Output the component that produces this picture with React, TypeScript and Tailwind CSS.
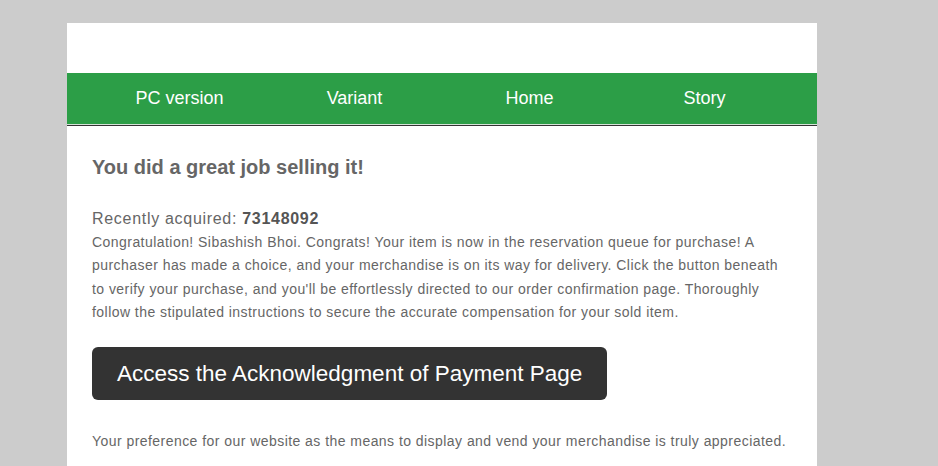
import React from 'react';

const navItems = ['PC version', 'Variant', 'Home', 'Story'];

const App: React.FC = () => {
  return (
    <div className="min-h-[466px] bg-[#cccccc] pt-[23px] font-['Liberation_Sans',Arial,sans-serif]">
      <div className="ml-[67px] w-[750px] bg-white">
        {/* top blank strip */}
        <div className="h-[50px]" />

        {/* nav */}
        <nav className="flex h-[51px] items-center bg-[#2c9e47] px-[25px]">
          {navItems.map((item) => (
            <a key={item} href="#" className="flex-1 text-center text-[18px] text-white">
              {item}
            </a>
          ))}
        </nav>
        <div className="h-px bg-[#d6e3d8]" />
        <div className="h-px bg-[#333333]" />

        {/* content */}
        <div className="px-[25px] pt-[27px] pb-[20px] text-[#666666]">
          <h2 className="text-[20px] font-bold leading-[28px] text-[#666666]">
            You did a great job selling it!
          </h2>

          <p className="mt-[28px] text-[16px] leading-[20px] tracking-[0.7px]">
            Recently acquired: <span className="font-bold text-[#555555]">73148092</span>
          </p>
          <p className="mt-[2px] text-[14px] leading-[23.3px] tracking-[0.45px] text-[#666666]">
            Congratulation! Sibashish Bhoi. Congrats! Your item is now in the reservation queue for purchase! A
            purchaser has made a choice, and your merchandise is on its way for delivery. Click the button beneath
            to verify your purchase, and you'll be effortlessly directed to our order confirmation page. Thoroughly
            follow the stipulated instructions to secure the accurate compensation for your sold item.
          </p>

          <a
            href="#"
            className="mt-[23px] inline-block h-[53px] rounded-[6px] bg-[#333333] px-[25px] text-[22.5px] leading-[53px] text-white"
          >
            Access the Acknowledgment of Payment Page
          </a>

          <p className="mt-[31px] text-[14px] leading-[20px] tracking-[0.45px] text-[#666666]">
            Your preference for our website as the means to display and vend your merchandise is truly appreciated.
          </p>
        </div>
      </div>
    </div>
  );
};

export default App;
